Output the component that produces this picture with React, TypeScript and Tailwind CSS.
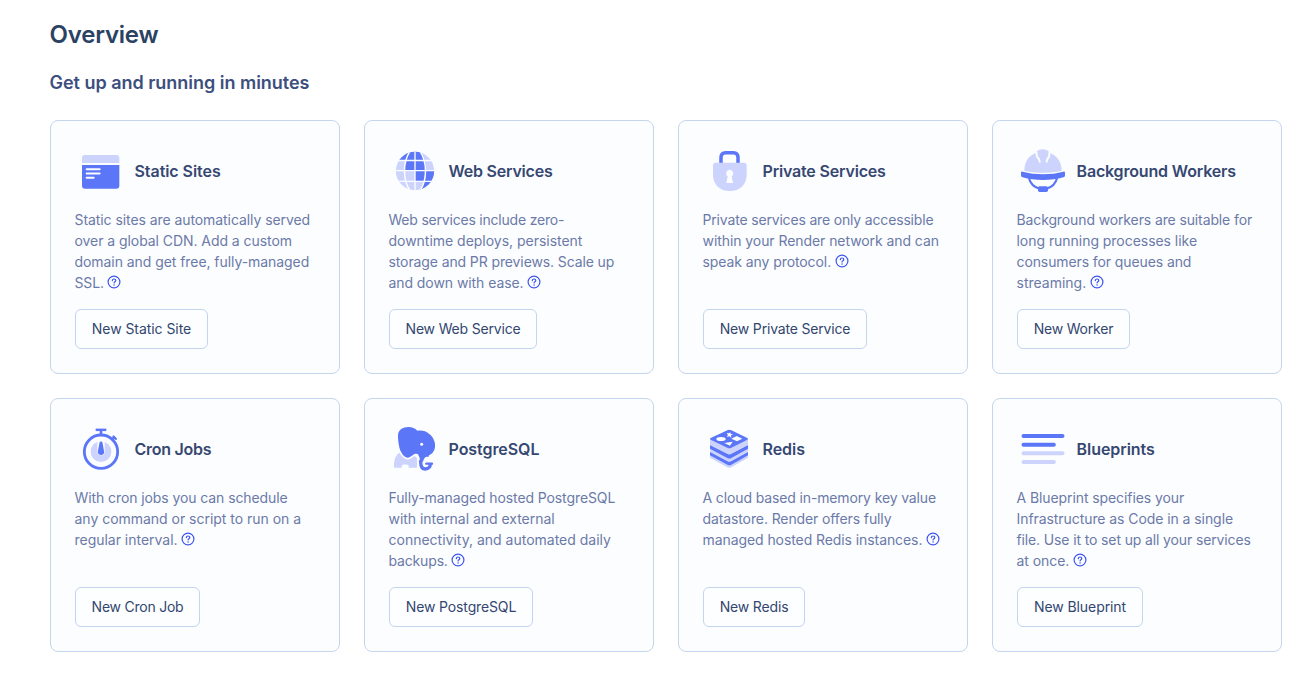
import type { ReactNode } from 'react';

const DEEP = '#5b76f7';
const PALE = '#ccd4fe';
const PAPER = '#fcfdff';

function Glyph({ box, children }: { box: string; children: ReactNode }) {
  return (
    <svg viewBox={box} className="h-12 w-[52px] shrink-0" fill="none" aria-hidden="true">
      {children}
    </svg>
  );
}

function StaticIcon() {
  return (
    <Glyph box="15 21 156 144">
      <path d="M36 69V54a9 9 0 0 1 9-9h94a9 9 0 0 1 9 9v15z" fill={PALE} />
      <path d="M36 75h112v62a9 9 0 0 1-9 9H45a9 9 0 0 1-9-9z" fill={DEEP} />
      <path d="M50 87.500h39M50 100.500h39M50 113.500h21" stroke={PAPER} strokeWidth="6" strokeLinecap="round" />
    </Glyph>
  );
}

function GlobeIcon() {
  return (
    <Glyph box="15 21 156 144">
      <defs>
        <clipPath id="globe">
          <circle cx="93" cy="93" r="57.500" />
        </clipPath>
      </defs>
      <g clipPath="url(#globe)">
        <rect x="33" y="33" width="120" height="120" fill={PALE} />
        <path d="M93 33v28H36l14-28z" fill={DEEP} />
        <path d="M93 33h15c7 8 12 16 14 28H93z" fill={DEEP} />
        <path d="M93 61H66c-3 10-4 20-4 31h31z" fill={DEEP} />
        <path d="M93 61h29c3 10 4 20 4 31H93z" fill={DEEP} />
        <path d="M93 92h33c0 11-1 22-4 32H93z" fill={DEEP} />
        <path d="M124 92h30v60h-48c16-18 18-38 18-60z" fill={DEEP} />
        <path d="M93 32v122M33 92h120M40 61.500h106M40 124h106" stroke={PAPER} strokeWidth="4" />
        <path d="M78 34C56 66 56 120 78 152M108 34c22 32 22 86 0 118" stroke={PAPER} strokeWidth="4.500" />
      </g>
    </Glyph>
  );
}

function LockIcon() {
  return (
    <Glyph box="9 21 156 144">
      <path d="M63 70V53c0-10 5-15 14-15h23c9 0 14 5 14 15v17" stroke={DEEP} strokeWidth="10.500" />
      <path d="M47 68h85a8 8 0 0 1 8 8v28c0 30-21 49-50.500 49S39 134 39 104V76a8 8 0 0 1 8-8z" fill={PALE} />
      <path d="M89 89a11 11 0 0 1 6 20l4 20H79l4-20a11 11 0 0 1 6-20z" fill={PAPER} />
    </Glyph>
  );
}

function HelmetIcon() {
  return (
    <Glyph box="21 21 156 144">
      <path d="M43 92c0-26 13-46 36-54 4-7 9-10 19-10s16 3 20 10c23 8 37 28 37 54-33 8-79 8-112 0z" fill={PALE} />
      <path d="M80 39v6c0 10 9 8 9 20M118 39v6c0 10-8 8-8 20" stroke={PAPER} strokeWidth="6" strokeLinecap="round" />
      <path d="M38 95c36 10 86 10 122 0 4-1 5 1 5 4v7c0 4-2 5-5 6-35 11-87 11-122 0-3-1-5-2-5-6v-7c0-3 1-5 5-4z" fill={DEEP} />
      <path d="M57 115c4 16 13 26 31 31M141 115c-4 16-13 26-31 31" stroke={DEEP} strokeWidth="6.500" />
      <rect x="84" y="139" width="30" height="17" rx="5" fill={DEEP} />
    </Glyph>
  );
}

function StopwatchIcon() {
  return (
    <Glyph box="15 15 156 144">
      <path d="M77 29.500h32" stroke={DEEP} strokeWidth="7.500" />
      <path d="M93 30v14M125 60l10-10" stroke={DEEP} strokeWidth="8" />
      <path d="m130 49 8 8" stroke={DEEP} strokeWidth="6" strokeLinecap="round" />
      <circle cx="93" cy="95" r="50" stroke={DEEP} strokeWidth="8.500" />
      <circle cx="93" cy="95" r="31" fill={PALE} />
      <path d="M82 62h22v33a11 11 0 0 1-22 0z" fill={PAPER} />
      <path d="M88.500 68c1-5 8-5 9 0l5 27c1 13-20 13-19 0z" fill={DEEP} />
    </Glyph>
  );
}

function ElephantIcon() {
  return (
    <Glyph box="15 15 156 144">
      <path d="M47 98c-10 5-17 18-17 37v8h23v-6c0-5 21-5 21 0v6h25v-29l-8-7-24 8-20-17z" fill={PALE} />
      <path
        d="M42 47c0-18 15-26 31-26 12 0 20 4 27 11 13-2 27 1 36 10 15 12 20 30 16 45-3 9-9 16-17 19l-1 4H108c-2-5-5-8-12-9-7-1-14 14-25 14-20 0-29-41-29-68z"
        fill={DEEP}
      />
      <path d="M106 108c4 5 4 11 4 17 0 14 5 22 14 22 10 0 15-7 15-15" stroke={DEEP} strokeWidth="10" />
      <path d="M105 104h31c-9 5-16 8-19 21h-12c0-8-1-14-6-19z" fill={DEEP} />
      <path d="M127 131h17" stroke={DEEP} strokeWidth="7" strokeLinecap="round" />
      <path d="M47 94c9 17 18 24 28 21 10-2 15-13 22-11 6 2 8 8 8 17" stroke={PAPER} strokeWidth="5" />
      <circle cx="113" cy="73" r="4.500" fill={PAPER} />
    </Glyph>
  );
}

function StackIcon() {
  return (
    <Glyph box="9 15 156 144">
      <path d="M30 97v16l52 29q6 3 12 0l50-29V97z" fill={PALE} />
      <path d="M30 96l52 27q6 3 12 0l50-27v10l-50 28q-6 3-12 0L30 106z" fill={DEEP} />
      <path d="M30 76v19l52 28q6 3 12 0l50-28V76z" fill={PALE} />
      <path d="M30 75l52 26q6 3 12 0l50-26v11l-50 28q-6 3-12 0L30 86z" fill={DEEP} />
      <path d="M30 56v19l52 26q6 3 12 0l50-26V56z" fill={PALE} />
      <path d="M32 54l50-23q6-3 12 0l48 23q4 3 0 5L94 83q-6 3-12 0L32 59q-4-2 0-5z" fill={DEEP} />
      <ellipse cx="63" cy="57" rx="14" ry="6" fill={PAPER} />
      <path d="m110 48 17 8-16 8-17-8zM73 69l25-4-8 12zM80 39l7 1 4-3 1 5 8 1-7 3 1 7-6-4-8 2 4-6z" fill={PAPER} />
    </Glyph>
  );
}

function LinesIcon() {
  return (
    <Glyph box="21 15 156 144">
      <path d="M40.500 48h117M40.500 74h91" stroke={DEEP} strokeWidth="12" strokeLinecap="round" />
      <path d="M40.500 100h117M40.500 126h91" stroke={PALE} strokeWidth="12" strokeLinecap="round" />
    </Glyph>
  );
}

function HelpIcon() {
  return (
    <svg viewBox="0 0 14 14" className="-mt-px ml-[3.5px] h-3.5 w-3.5 shrink-0" fill="none" stroke="#3d55ee" aria-hidden="true">
      <circle cx="7" cy="7" r="5.900" strokeWidth="1.200" />
      <path d="M5.300 5.600c.1-2.200 3.500-2.100 3.500 0 0 1.200-1.700 1.200-1.700 2.300" strokeWidth="1.200" strokeLinecap="round" />
      <circle cx="7.050" cy="9.900" r=".75" fill="#3d55ee" stroke="none" />
    </svg>
  );
}

type Service = {
  title: string;
  titleClass: string;
  icon: ReactNode;
  lines: [string, string][];
  action: string;
  actionClass: string;
};

const services: Service[] = [
  {
    title: 'Static Sites',
    titleClass: 'tracking-[-0.06px]',
    icon: <StaticIcon />,
    lines: [
      ['Static sites are automatically served', 'tracking-[-0.07px]'],
      ['over a global CDN. Add a custom', 'tracking-[-0.06px]'],
      ['domain and get free, fully-managed', 'tracking-[-0.06px]'],
      ['SSL.', 'tracking-[-0.15px]'],
    ],
    action: 'New Static Site',
    actionClass: 'w-[133px] tracking-[-0.06px]',
  },
  {
    title: 'Web Services',
    titleClass: 'tracking-[-0.22px]',
    icon: <GlobeIcon />,
    lines: [
      ['Web services include zero-', 'tracking-[-0.21px]'],
      ['downtime deploys, persistent', 'tracking-[-0.02px]'],
      ['storage and PR previews. Scale up', 'tracking-[-0.11px]'],
      ['and down with ease.', 'tracking-[-0.07px]'],
    ],
    action: 'New Web Service',
    actionClass: 'w-[148px] tracking-[-0.18px]',
  },
  {
    title: 'Private Services',
    titleClass: 'tracking-[-0.18px]',
    icon: <LockIcon />,
    lines: [
      ['Private services are only accessible', 'tracking-[-0.17px]'],
      ['within your Render network and can', 'tracking-[-0.07px]'],
      ['speak any protocol.', 'tracking-[-0.08px]'],
    ],
    action: 'New Private Service',
    actionClass: 'w-[164px] tracking-[-0.18px]',
  },
  {
    title: 'Background Workers',
    titleClass: 'tracking-[-0.17px]',
    icon: <HelmetIcon />,
    lines: [
      ['Background workers are suitable for', 'tracking-[-0.12px]'],
      ['long running processes like', 'tracking-[-0.04px]'],
      ['consumers for queues and', 'tracking-[-0.1px]'],
      ['streaming.', 'tracking-normal'],
    ],
    action: 'New Worker',
    actionClass: 'w-[113px] tracking-[-0.22px]',
  },
  {
    title: 'Cron Jobs',
    titleClass: 'tracking-[-0.27px]',
    icon: <StopwatchIcon />,
    lines: [
      ['With cron jobs you can schedule', 'tracking-[-0.09px]'],
      ['any command or script to run on a', 'tracking-[-0.02px]'],
      ['regular interval.', 'tracking-[-0.02px]'],
    ],
    action: 'New Cron Job',
    actionClass: 'w-[125px] tracking-[-0.24px]',
  },
  {
    title: 'PostgreSQL',
    titleClass: 'tracking-[-0.06px]',
    icon: <ElephantIcon />,
    lines: [
      ['Fully-managed hosted PostgreSQL', 'tracking-[-0.1px]'],
      ['with internal and external', 'tracking-[-0.03px]'],
      ['connectivity, and automated daily', 'tracking-normal'],
      ['backups.', 'tracking-[-0.16px]'],
    ],
    action: 'New PostgreSQL',
    actionClass: 'w-[144px] tracking-[-0.14px]',
  },
  {
    title: 'Redis',
    titleClass: 'tracking-[-0.06px]',
    icon: <StackIcon />,
    lines: [
      ['A cloud based in-memory key value', 'tracking-[-0.13px]'],
      ['datastore. Render offers fully', 'tracking-[-0.11px]'],
      ['managed hosted Redis instances.', 'tracking-[-0.08px]'],
    ],
    action: 'New Redis',
    actionClass: 'w-[102px] tracking-[-0.16px]',
  },
  {
    title: 'Blueprints',
    titleClass: 'tracking-[-0.05px]',
    icon: <LinesIcon />,
    lines: [
      ['A Blueprint specifies your', 'tracking-[-0.09px]'],
      ['Infrastructure as Code in a single', 'tracking-[-0.07px]'],
      ['file. Use it to set up all your services', 'tracking-[-0.13px]'],
      ['at once.', 'tracking-[-0.05px]'],
    ],
    action: 'New Blueprint',
    actionClass: 'w-[126px] tracking-[-0.08px]',
  },
];

function ServiceCard({ service }: { service: Service }) {
  return (
    <article className="flex h-[254px] flex-col rounded-lg border border-[#c5d5ed] bg-[#fcfdff] px-6 pt-[26px] pb-6">
      <div className="flex h-12 items-center gap-[7.5px]">
        {service.icon}
        <h3 className={`text-base font-semibold whitespace-nowrap text-[#364871] ${service.titleClass}`}>
          {service.title}
        </h3>
      </div>
      <p className="mt-3.5 -ml-[0.5px] h-[84px] text-sm leading-[21px] whitespace-nowrap text-[#6b7aa8]">
        {service.lines.map(([text, tracking], i) => (
          <span key={text} className={`flex h-[21px] items-center ${tracking}`}>
            {text}
            {i === service.lines.length - 1 && <HelpIcon />}
          </span>
        ))}
      </p>
      <button
        type="button"
        className={`mt-4 flex h-10 items-center justify-center rounded-md border border-[#c5d5ed] bg-[#fdfeff] text-sm whitespace-nowrap text-[#33466f] ${service.actionClass}`}
      >
        {service.action}
      </button>
    </article>
  );
}

export default function App() {
  return (
    <main className="h-[679px] w-[1314px] overflow-hidden bg-white pt-[19px] pl-[50px] font-['Inter',sans-serif]">
      <h1 className="-ml-[0.5px] text-2xl leading-8 font-semibold tracking-[-0.2px] text-[#2b4263]">Overview</h1>
      <h2 className="mt-[18px] -ml-[0.5px] text-lg leading-7 font-semibold tracking-[-0.02px] text-[#3c4f7e]">
        Get up and running in minutes
      </h2>
      <section className="mt-[23px] grid w-[1232px] grid-cols-4 gap-6">
        {services.map((service) => (
          <ServiceCard key={service.title} service={service} />
        ))}
      </section>
    </main>
  );
}
